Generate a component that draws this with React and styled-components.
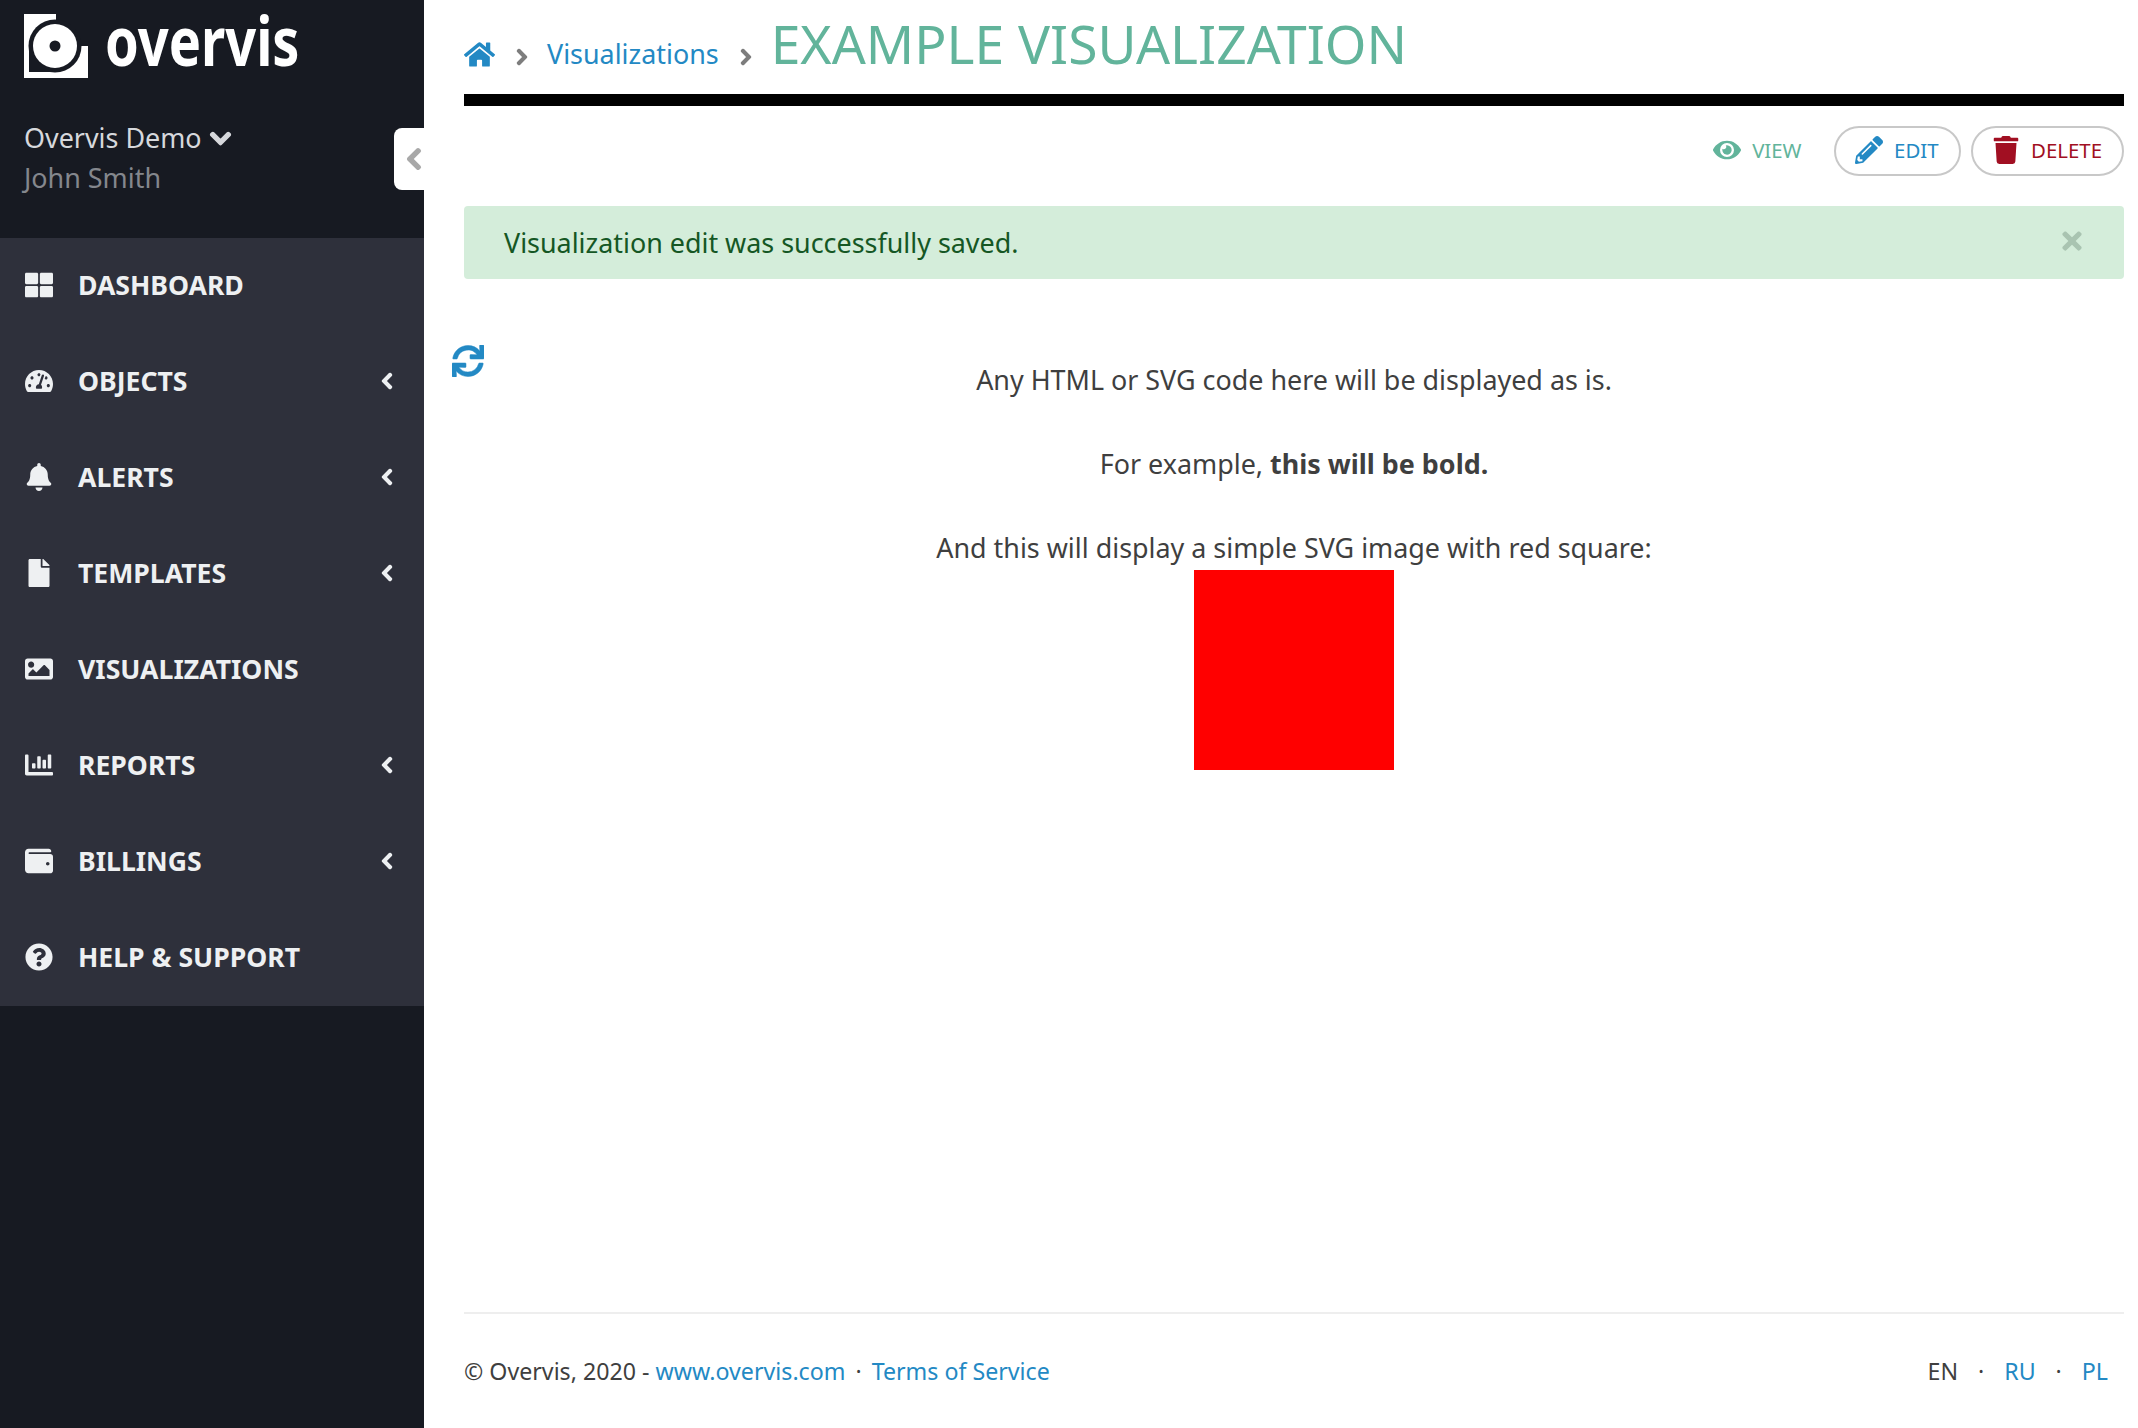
import React from 'react';
import styled, { createGlobalStyle, css } from 'styled-components';
import {
  FaThLarge, FaTachometerAlt, FaBell, FaFile, FaImage, FaChartBar, FaWallet, FaQuestionCircle,
  FaChevronLeft, FaChevronDown, FaChevronRight, FaHome, FaEye, FaPencilAlt, FaTrash, FaSync, FaTimes,
} from 'react-icons/fa';

const GlobalStyle = createGlobalStyle`
  html, body { margin: 0; padding: 0; height: 100%; background: #fff; }
  body { font-family: "Noto Sans", "Open Sans", sans-serif; color: #3f3f3f; font-size: 26.9px; }
  * { box-sizing: border-box; }
  a { color: #2389c4; text-decoration: none; }
`;

// the chevrons in the reference are heavier than the stock glyphs
const heavy = css`
  svg { stroke: currentColor; stroke-width: 36; }
`;

const navItems = [
  { label: 'DASHBOARD', icon: FaThLarge },
  { label: 'OBJECTS', icon: FaTachometerAlt, sub: true },
  { label: 'ALERTS', icon: FaBell, sub: true },
  { label: 'TEMPLATES', icon: FaFile, sub: true },
  { label: 'VISUALIZATIONS', icon: FaImage },
  { label: 'REPORTS', icon: FaChartBar, sub: true },
  { label: 'BILLINGS', icon: FaWallet, sub: true },
  { label: 'HELP & SUPPORT', icon: FaQuestionCircle },
];

const Logo = () => (
  <svg width="64" height="64" viewBox="0 0 64 64">
    <path fill="#fff" d="M0 0H32V10L31 32H64V64H0Z" />
    <circle cx="31" cy="32" r="26.5" fill="#171a22" />
    <rect x="5" y="32" width="26" height="26" fill="#171a22" />
    <circle cx="31" cy="32" r="22" fill="#fff" />
    <circle cx="31" cy="32" r="5.5" fill="#171a22" />
  </svg>
);

const App = () => (
  <Page>
    <GlobalStyle />
    <Sidebar>
      <SideHead>
        <Brand>
          <Logo />
          <BrandName>overvis</BrandName>
        </Brand>
        <Account>Overvis Demo <FaChevronDown /></Account>
        <UserName>John Smith</UserName>
        <Collapse><FaChevronLeft /></Collapse>
      </SideHead>
      <Nav>
        {navItems.map(({ label, icon: Icon, sub }) => (
          <NavItem key={label}>
            <NavIcon><Icon /></NavIcon>
            <NavLabel>{label}</NavLabel>
            {sub && <NavArrow><FaChevronLeft /></NavArrow>}
          </NavItem>
        ))}
      </Nav>
    </Sidebar>
    <Main>
      <Crumbs>
        <HomeLink href="#"><FaHome /></HomeLink>
        <CrumbSep><FaChevronRight /></CrumbSep>
        <CrumbLink href="#">Visualizations</CrumbLink>
        <CrumbSep><FaChevronRight /></CrumbSep>
        <Title>EXAMPLE VISUALIZATION</Title>
      </Crumbs>
      <Actions>
        <ActionButton $color="#62b49b" $plain><FaEye />VIEW</ActionButton>
        <ActionButton $color="#2389c4"><FaPencilAlt />EDIT</ActionButton>
        <ActionButton $color="#a10f22"><FaTrash />DELETE</ActionButton>
      </Actions>
      <Alert>
        Visualization edit was successfully saved.
        <AlertClose><FaTimes /></AlertClose>
      </Alert>
      <Content>
        <Refresh><FaSync /></Refresh>
        <Para>Any HTML or SVG code here will be displayed as is.</Para>
        <Para>For example, <strong>this will be bold.</strong></Para>
        <Para>And this will display a simple SVG image with red square:</Para>
        <svg width="200" height="200" viewBox="0 0 200 200"><rect width="200" height="200" fill="#ff0000" /></svg>
      </Content>
      <Footer>
        <span>© Overvis, 2020 - <a href="#">www.overvis.com</a><Dot>·</Dot><a href="#">Terms of Service</a></span>
        <span>EN<Dot $wide>·</Dot><a href="#">RU</a><Dot $wide>·</Dot><a href="#">PL</a></span>
      </Footer>
    </Main>
  </Page>
);

const Page = styled.div`
  display: flex;
  height: 1428px;
  overflow: hidden;
`;

const Sidebar = styled.aside`
  width: 424px;
  flex: none;
  background: #171a22;
`;

const SideHead = styled.div`
  position: relative;
  height: 238px;
  padding: 14px 24px 0;
`;

const Brand = styled.div`
  display: flex;
  align-items: center;
  gap: 17px;
  height: 64px;
`;

const BrandName = styled.span`
  margin-bottom: 15px;
  color: #fff;
  font-size: 69px;
  font-weight: 700;
  line-height: 64px;
  transform: scaleX(0.785);
  transform-origin: left center;
`;

const Account = styled.div`
  margin-top: 40px;
  color: #d6d8dc;
  line-height: 40px;
  ${heavy}
  svg { font-size: 23px; vertical-align: -2px; }
`;

const UserName = styled.div`
  color: #84878d;
  line-height: 40px;
`;

const Collapse = styled.div`
  position: absolute;
  right: 0;
  top: 128px;
  width: 30px;
  height: 62px;
  padding-left: 10px;
  display: flex;
  align-items: center;
  background: #fff;
  border-radius: 8px 0 0 8px;
  color: #a8a8a8;
  font-size: 24px;
  ${heavy}
`;

const Nav = styled.nav`
  background: #2e303b;
`;

const NavItem = styled.div`
  display: flex;
  align-items: center;
  height: 96px;
  padding: 0 28px 3px 23px;
  color: #eef0f2;
`;

const NavIcon = styled.span`
  display: flex;
  justify-content: center;
  width: 32px;
  margin-right: 23px;
  font-size: 28px;
`;

const NavLabel = styled.span`
  flex: 1;
  font-size: 26.6px;
  font-weight: 700;
`;

const NavArrow = styled.span`
  display: flex;
  font-size: 18px;
  ${heavy}
`;

const Main = styled.main`
  flex: 1;
  min-width: 0;
  display: flex;
  flex-direction: column;
  padding: 0 14px 0 40px;
`;

const Crumbs = styled.div`
  display: flex;
  align-items: center;
  height: 106px;
  padding-bottom: 7px;
  border-bottom: 12px solid #000;
`;

const HomeLink = styled.a`
  display: flex;
  margin-top: 21px;
  font-size: 31px;
`;

const CrumbSep = styled.span`
  display: flex;
  margin: 27px 16px 0 18px;
  color: #7d7d7d;
  font-size: 18px;
  ${heavy}
`;

const CrumbLink = styled.a`
  margin-top: 19px;
`;

const Title = styled.h1`
  margin: 0;
  color: #62b49b;
  font-size: 53.4px;
  font-weight: 400;
  line-height: 64px;
  white-space: nowrap;
`;

const Actions = styled.div`
  display: flex;
  justify-content: flex-end;
  gap: 10px;
  margin-top: 20px;
`;

const ActionButton = styled.a`
  display: flex;
  align-items: center;
  gap: 11.5px;
  height: 50px;
  padding: 0 20px 3px 19px;
  border: 2px solid ${(p) => (p.$plain ? 'transparent' : '#c8c8c8')};
  border-radius: 25px;
  color: ${(p) => p.$color};
  font-size: 20.4px;
  svg { font-size: 28px; }
`;

const Alert = styled.div`
  position: relative;
  display: flex;
  align-items: center;
  height: 73px;
  margin-top: 30px;
  padding: 0 40px;
  background: #d4edda;
  border-radius: 4px;
  color: #155724;
`;

const AlertClose = styled.span`
  position: absolute;
  right: 38px;
  top: 21px;
  display: flex;
  color: #a9c4b1;
  font-size: 28px;
`;

const Content = styled.div`
  position: relative;
  flex: 1;
  display: flex;
  flex-direction: column;
  align-items: center;
  padding-top: 79px;
`;

const Refresh = styled.span`
  position: absolute;
  left: -12px;
  top: 66px;
  display: flex;
  color: #2389c4;
  font-size: 32px;
  svg { stroke: currentColor; stroke-width: 8; }
`;

const Para = styled.p`
  margin: 0 0 40px;
  line-height: 44px;
  &:nth-of-type(3) { margin-bottom: 0; }
`;

const Footer = styled.footer`
  display: flex;
  justify-content: space-between;
  align-items: center;
  height: 116px;
  padding-right: 16px;
  border-top: 2px solid #eeeeee;
  font-size: 23.2px;
`;

const Dot = styled.span`
  margin: 0 ${(p) => (p.$wide ? '20px' : '10px')};
`;

export default App;
